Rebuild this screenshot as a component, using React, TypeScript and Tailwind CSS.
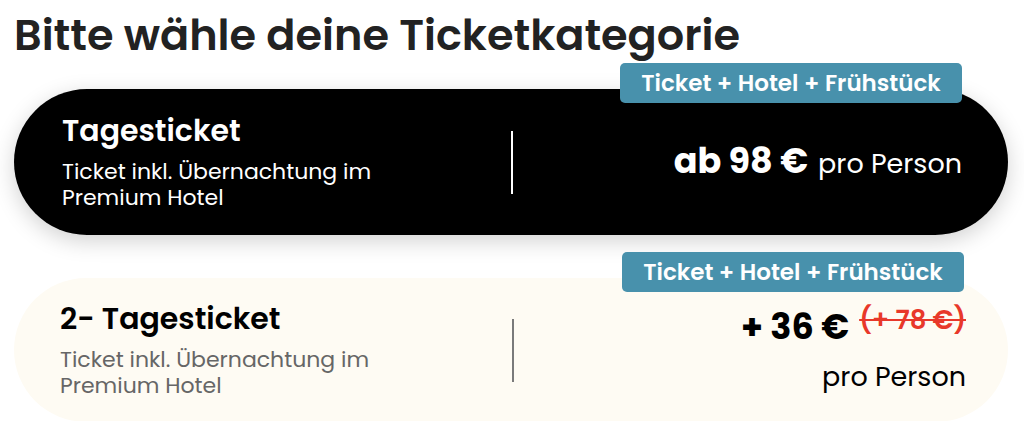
import React from "react";

const font = { fontFamily: "Poppins, Inter, 'Noto Sans', sans-serif" };

function Badge({ right }: { right: string }) {
  return (
    <div
      className={`absolute top-[-26px] flex h-[40px] w-[342px] items-center justify-center rounded-[5px] bg-[#4891ac] text-[23px] font-semibold leading-none text-white ${right}`}
    >
      Ticket + Hotel + Frühstück
    </div>
  );
}

export default function App() {
  return (
    <div className="min-h-[421px] w-[1024px] overflow-hidden bg-white pl-[14px] pr-[16px]" style={font}>
      <h1 className="pt-[11px] text-[43px] font-semibold leading-[48px] text-[#222222]">
        Bitte wähle deine Ticketkategorie
      </h1>

      <div className="relative mt-[30px] flex h-[146px] items-center rounded-full bg-black pl-[48px] pr-[46px] shadow-[0_6px_22px_rgba(0,0,0,0.18)]">
        <Badge right="right-[46px]" />
        <div className="flex flex-1 flex-col">
          <div className="text-[30px] font-semibold leading-[36px] text-white">Tagesticket</div>
          <div className="mt-[10px] w-[360px] text-[22px] leading-[26px] text-white">
            Ticket inkl. Übernachtung im Premium Hotel
          </div>
        </div>
        <div className="h-[63px] w-[2px] bg-white" />
        <div className="flex flex-1 items-baseline justify-end text-white">
          <span className="text-[35px] font-bold leading-[44px]">ab 98 €</span>
          <span className="ml-[10px] text-[27px] leading-[44px]">pro Person</span>
        </div>
      </div>

      <div className="relative mt-[43px] flex h-[144px] items-center rounded-full bg-[#fefbf3] pl-[46px] pr-[42px]">
        <Badge right="right-[44px]" />
        <div className="flex flex-1 flex-col">
          <div className="text-[30px] font-semibold leading-[36px] text-black">2- Tagesticket</div>
          <div className="mt-[10px] w-[360px] text-[22px] leading-[26px] text-[#666666]">
            Ticket inkl. Übernachtung im Premium Hotel
          </div>
        </div>
        <div className="h-[63px] w-[2px] bg-[#7a7a7a]" />
        <div className="flex flex-1 flex-col items-end">
          <div className="flex items-start">
            <span className="text-[35px] font-bold leading-[40px] text-black">+ 36 €</span>
            <span className="ml-[10px] mt-[-2px] text-[26px] font-semibold leading-[30px] text-[#e8382a] line-through">
              (+ 78 €)
            </span>
          </div>
          <div className="mt-[14px] text-[27px] leading-[32px] text-black">pro Person</div>
        </div>
      </div>
    </div>
  );
}
